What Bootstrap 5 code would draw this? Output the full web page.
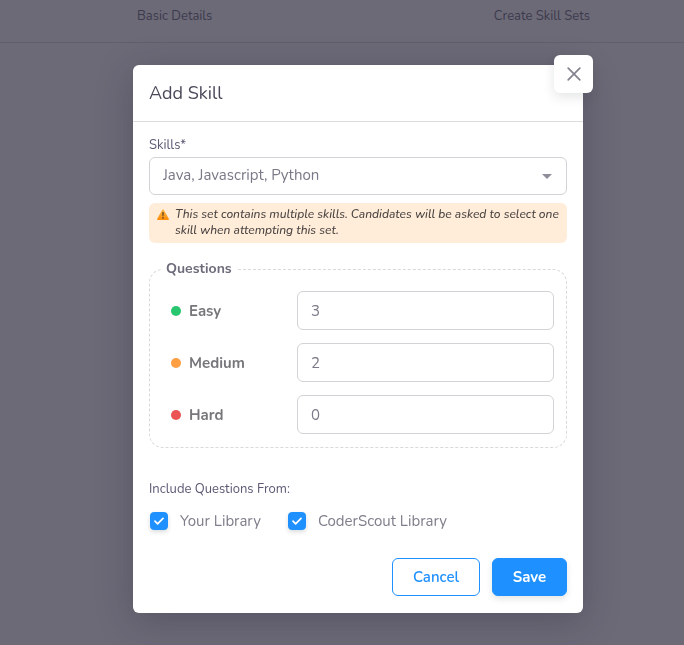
<!DOCTYPE html>
<html lang="en">
<head>
<meta charset="utf-8">
<meta name="viewport" content="width=device-width, initial-scale=1">
<title>Add Skill</title>
<link href="https://cdn.jsdelivr.net/npm/bootstrap@5.3.0/dist/css/bootstrap.min.css" rel="stylesheet">
<style>
  body { font-family: Nunito, Lato, sans-serif; font-size: 15px; line-height: 22px; color: #6e6b7b; background: #6c6a77; }
  .steps-bar { padding: 5px 0 15px 43px; border-bottom: 1px solid #615f6c; color: #3d3a4e; font-size: 13px; }
  .steps-inner { max-width: 453px; }
  .skill-modal { padding-left: 32px; }
  .skill-modal .modal-dialog { max-width: 450px; margin: 65px auto 32px; }
  .skill-modal .modal-content { border: 0; border-radius: 6px; color: inherit; box-shadow: 0 8px 36px rgba(34, 31, 51, .28); }
  .skill-modal .modal-header { padding: 16px; border-bottom: 1px solid #dcdcde; }
  .skill-modal .modal-title { font-size: 18px; line-height: 24px; font-weight: 400; color: #4b4859; }
  .close-tile { position: absolute; top: -10px; right: -10px; width: 39px; height: 38px; border: 0; border-radius: 6px; background: #fff; color: #85828f; box-shadow: 0 4px 12px rgba(34, 41, 47, .12); }
  .skill-modal .modal-body { padding: 13px 16px 17px; }
  .field-label { font-size: 13px; line-height: 20px; color: #5e5873; }
  .form-select, .form-control { border-color: #d3d2d6; border-radius: 6px; padding: 7px 13px; font-size: 15px; line-height: 22px; color: #7b7887; }
  .form-select { height: 38px; margin-top: 2px; padding: 6px 32px 8px 13px; background-size: 10px 5px; background-position: right 14px center;
    background-image: url("data:image/svg+xml,%3Csvg xmlns='http://www.w3.org/2000/svg' viewBox='0 0 10 5'%3E%3Cpath d='M0 0h10L5 5z' fill='%23918e9b'/%3E%3C/svg%3E"); }
  .form-control { height: 39px; }
  .notice { gap: 6px; padding: 3px 8px 5px; border-radius: 6px; background: #ffecd9; color: #4b4644; font-size: 12px; line-height: 16px; font-style: italic; font-weight: 500; }
  .notice svg { margin-top: 3px; }
  .question-set { margin-top: 15px; padding: 11px 12px 13px 21px; border: 1px dashed #d9d8dc; border-radius: 14px; }
  .question-set legend { float: none; width: auto; margin: 0 0 0 -9px; padding: 0 4px; font-size: 14px; line-height: 22px; font-weight: 700; color: #6e6b7b; }
  .question-rows { gap: 13px; }
  .question-row { display: grid; grid-template-columns: 126px 1fr; align-items: center; }
  .question-row label { font-weight: 700; color: #77767b; }
  .dot { width: 10px; height: 10px; border-radius: 50%; }
  .dot-easy { background: #28c76f; }
  .dot-medium { background: #ff9f43; }
  .dot-hard { background: #ea5455; }
  .sources { margin-top: 31px; }
  .source-list { column-gap: 26px; margin-top: 11px; }
  .source-check { width: 18px; height: 18px; margin: 0 12px 0 1px; border-radius: 4px; box-shadow: 0 2px 4px rgba(34, 41, 47, .16); }
  .source-check:checked { background-color: #1e90ff; border-color: #1e90ff; background-size: 10px 10px;
    background-image: url("data:image/svg+xml,%3Csvg xmlns='http://www.w3.org/2000/svg' viewBox='0 0 10 10' fill='none' stroke='white' stroke-width='1.7' stroke-linecap='round' stroke-linejoin='round'%3E%3Cpath d='M1 5.2 3.6 7.8 9 2.4'/%3E%3C/svg%3E"); }
  .source-text { color: #807d8a; }
  .actions { gap: 12px; margin-top: 26px; }
  .actions .btn { height: 38px; padding: 7px 19px; border-radius: 6px; font-size: 15px; line-height: 22px; }
  .btn-cancel { min-width: 88px; border-color: #1e90ff; color: #1e90ff; font-weight: 600; }
  .btn-save { min-width: 75px; border-color: #1e90ff; background: #1e90ff; color: #fff; font-weight: 700; box-shadow: 0 3px 6px rgba(34, 41, 47, .12); }
</style>
</head>
<body>
<header class="steps-bar">
  <div class="steps-inner d-flex justify-content-between mx-auto">
    <span>Basic Details</span>
    <span>Create Skill Sets</span>
  </div>
</header>

<div class="modal skill-modal d-block" role="dialog" aria-labelledby="skillTitle">
  <div class="modal-dialog">
    <form class="modal-content">
      <div class="modal-header">
        <h1 class="modal-title" id="skillTitle">Add Skill</h1>
        <button type="button" class="close-tile d-flex align-items-center justify-content-center p-0" aria-label="Close">
          <svg width="14" height="14" viewBox="0 0 14 14" fill="none" stroke="currentColor" stroke-width="1.7" stroke-linecap="round"><path d="M1.2 1.2l11.6 11.6M12.8 1.2L1.2 12.8"/></svg>
        </button>
      </div>
      <div class="modal-body">
        <label class="field-label d-block" for="skills">Skills*</label>
        <select class="form-select" id="skills">
          <option>Java, Javascript, Python</option>
        </select>
        <div class="notice d-flex mt-2" role="note">
          <svg class="flex-shrink-0" width="12" height="11" viewBox="1 0 12 11.300" preserveAspectRatio="none" aria-hidden="true"><defs><linearGradient id="amber" x2="0" y2="1"><stop offset="0" stop-color="#f7b84a"/><stop offset="1" stop-color="#ff8c08"/></linearGradient></defs><path d="M6.1.9Q7-.3 7.9.9l4.900 9q.5 1.300-.8 1.400H2Q.7 11.200 1.200 9.900z" fill="url(#amber)"/><path d="M6.200 3.300h1.600l-.3 4.100h-1z" fill="#63461f"/><circle cx="7" cy="9.100" r=".9" fill="#63461f"/></svg>
          <span>This set contains multiple skills. Candidates will be asked to select one skill when attempting this set.</span>
        </div>

        <fieldset class="question-set">
          <legend>Questions</legend>
          <div class="question-rows d-grid">
            <div class="question-row">
              <label class="d-flex align-items-center gap-2" for="easy"><span class="dot dot-easy"></span>Easy</label>
              <input class="form-control" id="easy" type="text" inputmode="numeric" value="3">
            </div>
            <div class="question-row">
              <label class="d-flex align-items-center gap-2" for="medium"><span class="dot dot-medium"></span>Medium</label>
              <input class="form-control" id="medium" type="text" inputmode="numeric" value="2">
            </div>
            <div class="question-row">
              <label class="d-flex align-items-center gap-2" for="hard"><span class="dot dot-hard"></span>Hard</label>
              <input class="form-control" id="hard" type="text" inputmode="numeric" value="0">
            </div>
          </div>
        </fieldset>

        <fieldset class="sources">
          <legend class="field-label float-none mb-0">Include Questions From:</legend>
          <div class="source-list d-flex flex-wrap">
            <label class="source-text d-flex align-items-center" for="own"><input class="form-check-input source-check" type="checkbox" id="own" checked>Your Library</label>
            <label class="source-text d-flex align-items-center" for="shared"><input class="form-check-input source-check" type="checkbox" id="shared" checked>CoderScout Library</label>
          </div>
        </fieldset>

        <div class="actions d-flex justify-content-end">
          <button type="button" class="btn btn-cancel">Cancel</button>
          <button type="submit" class="btn btn-save">Save</button>
        </div>
      </div>
    </form>
  </div>
</div>
<script src="https://cdn.jsdelivr.net/npm/bootstrap@5.3.0/dist/js/bootstrap.bundle.min.js"></script>
</body>
</html>
